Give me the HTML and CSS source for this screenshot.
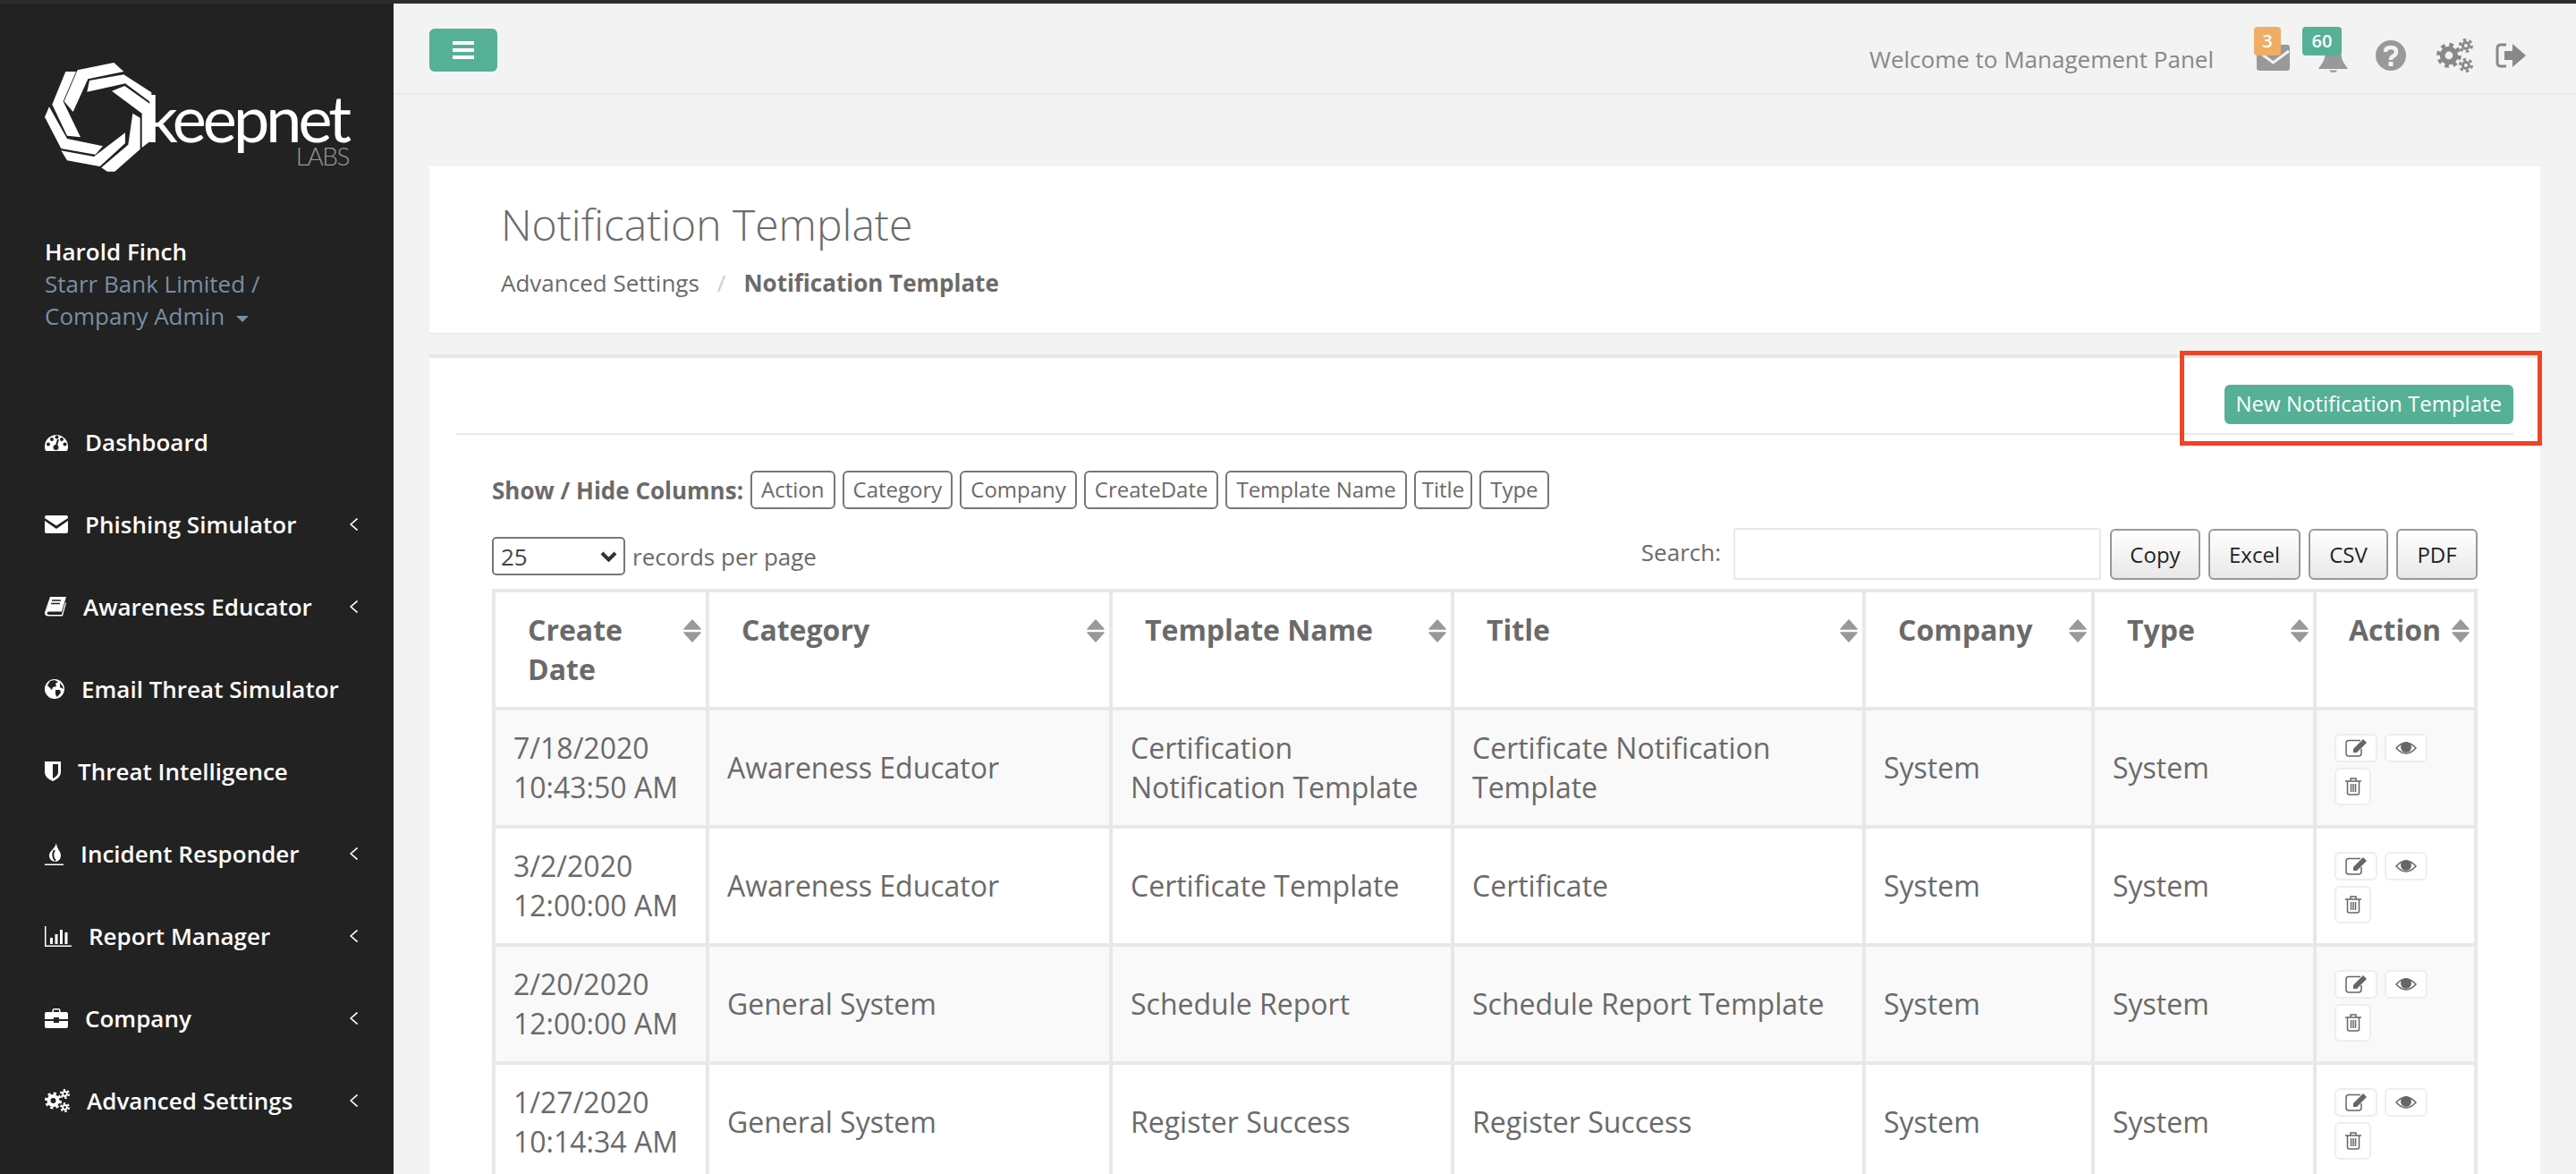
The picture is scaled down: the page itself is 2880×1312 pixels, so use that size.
FILE: index.html
```html
<!DOCTYPE html>
<html lang="en">

<head>
    <meta charset="UTF-8">
    <meta name="viewport" content="width=device-width, initial-scale=1.0">
    <title>Notification Template</title>
    <link rel="stylesheet" href="styles.css">
</head>

<body>
    <!-- iconos -->
    <svg class="sprite" xmlns="http://www.w3.org/2000/svg">
        <symbol id="i-dash" viewBox="0 0 26 19">
            <path fill="currentColor" d="M2 19Q0 19 0 14A13 13 0 0 1 26 14Q26 19 24 19Z" />
            <g fill="#222"><circle cx="4" cy="11.5" r="2" /><circle cx="8" cy="6" r="2" /><circle cx="13.500" cy="3.500" r="2" /><circle cx="19" cy="6" r="2" /><circle cx="22.500" cy="11.500" r="2" /><circle cx="12.500" cy="15" r="3" /></g>
            <path stroke="#222" stroke-width="2" d="M12.500 15L15 6" />
        </symbol>
        <symbol id="i-mail" viewBox="0 0 26 20">
            <path fill="currentColor" d="M0 2Q0 0 2 0H24Q26 0 26 2V3L13 11.500L0 3ZM0 6L13 15L26 6V18Q26 20 24 20H2Q0 20 0 18Z" />
        </symbol>
        <symbol id="i-book" viewBox="0 0 24 22">
            <path fill="currentColor" d="M6 0H24L19 16.500H5Q2.500 16.500 2.500 18.200T5 20H19L23 6L24 7L20 21.500H4Q0 21.500 0 17.500Z" />
            <path stroke="#222" stroke-width="1.500" d="M8 4H18M7 7.500H17" />
        </symbol>
        <symbol id="i-globe" viewBox="0 0 22 22">
            <circle fill="currentColor" cx="11" cy="11" r="11" />
            <path fill="#222" d="M6 2L11 1L15 3L12 5L13 8L9 9L8 12L5 9L3 7ZM12 12L17 12L18 15L14 20L12 17ZM17 4L20 8L21 11L17 9Z" />
        </symbol>
        <symbol id="i-shield" viewBox="0 0 18 22">
            <path fill="currentColor" d="M0 0H18V12Q18 18 9 22Q0 18 0 12Z" />
            <path fill="#222" d="M9 3H15V12Q15 16 9 19Z" />
        </symbol>
        <symbol id="i-fire" viewBox="0 0 21 25">
            <path fill="currentColor" d="M13 0C12 6 5 9 5 14C5 18 8 21 12 21C16 21 18 17 18 14C18 9 13 6 13 0ZM0 23.500H21V25H0Z" />
            <path fill="none" stroke="#222" stroke-width="2" d="M11 8Q7 14 12 20" />
        </symbol>
        <symbol id="i-chart" viewBox="0 0 30 23">
            <path fill="currentColor" d="M0 0H1.500V21.500H30V23H0ZM6 13H9V20H6ZM11.500 9H14.500V20H11.500ZM17 4H20V20H17ZM22.500 7H25.500V20H22.500Z" />
        </symbol>
        <symbol id="i-case" viewBox="0 0 26 22">
            <path fill="currentColor" d="M8.500 4V2Q8.500 0 10.500 0H15.500Q17.500 0 17.500 2V4H16V1.500H10V4ZM0 6Q0 4 2 4H24Q26 4 26 6V12H16V10H10V12H0ZM0 14H10V16H16V14H26V20Q26 22 24 22H2Q0 22 0 20Z" />
        </symbol>
        <symbol id="i-gears" viewBox="0 0 28 26">
            <g fill="none" stroke="currentColor">
                <circle cx="9.500" cy="13" r="5" stroke-width="4" />
                <circle cx="9.500" cy="13" r="8" stroke-width="3" stroke-dasharray="3.140 3.140" />
                <circle cx="22.500" cy="5.500" r="2.400" stroke-width="2" />
                <circle cx="22.500" cy="5.500" r="4.500" stroke-width="2" stroke-dasharray="2.360 2.360" />
                <circle cx="22.500" cy="20.500" r="2.400" stroke-width="2" />
                <circle cx="22.500" cy="20.500" r="4.500" stroke-width="2" stroke-dasharray="2.360 2.360" />
            </g>
        </symbol>
        <symbol id="i-back" viewBox="0 0 9 14">
            <path fill="none" stroke="currentColor" stroke-width="1.600" d="M8.500 .5L1.200 7L8.500 13.500" />
        </symbol>
        <symbol id="i-sort" viewBox="0 0 20 26">
            <path fill="currentColor" stroke="currentColor" stroke-width="1.500" stroke-linejoin="round" d="M10 1L19 11H1ZM1 15H19L10 25Z" />
        </symbol>
        <symbol id="i-edit" viewBox="0 0 24 20">
            <path fill="none" stroke="currentColor" stroke-width="1.500" d="M17 1.500H4Q1 1.500 1 4.500V16Q1 19 4 19H15Q18 19 18 16V11" />
            <path fill="currentColor" d="M20 0L24 4L13 15H9V11Z" />
        </symbol>
        <symbol id="i-eye" viewBox="0 0 24 16">
            <path fill="none" stroke="currentColor" stroke-width="1.500" d="M1 8Q12 -4 23 8Q12 20 1 8Z" />
            <circle fill="currentColor" cx="12" cy="7" r="6" />
        </symbol>
        <symbol id="i-trash" viewBox="0 0 18 20">
            <path fill="none" stroke="currentColor" stroke-width="1.500" d="M0 4H18M6 4V1H12V4M2.500 4V17Q2.500 19 4.500 19H13.500Q15.500 19 15.500 17V4" />
            <path stroke="currentColor" stroke-width="1.500" d="M6.500 7V16M9 7V16M11.500 7V16" />
        </symbol>
    </svg>

    <aside class="sidebar">
        <div class="logo">
            <svg class="logo-mark" viewBox="30 30 360 366" xmlns="http://www.w3.org/2000/svg">
                <path fill="#fff" d="M140 55L262 30L295 60L175 85L125 195L95 160Z" />
                <path fill="#fff" d="M100 60L135 60L92 160L150 280L105 275L55 170Z" />
                <path fill="#fff" d="M45 178L105 285L225 310L200 338L85 318L30 212Z" />
                <path fill="#fff" d="M85 325L195 345L300 265L300 300L215 378L105 358Z" />
                <path fill="#fff" d="M220 382L310 305L325 200L350 215L350 320L265 395L240 395Z" />
                <path fill="#fff" d="M180 90L295 70L388 130L388 165L300 100L172 128Z" />
                <path fill="#fff" d="M255 125L298 108L388 172L388 290L356 315L356 200Z" />
            </svg>
            <div class="logo-text">
                <span class="logo-name">keepnet</span>
                <span class="logo-sub">LABS</span>
            </div>
        </div>

        <div class="user">
            <div class="user-name">Harold Finch</div>
            <div class="user-role">Starr Bank Limited /<br>Company Admin <span class="caret"></span></div>
        </div>

        <ul class="menu">
            <li><svg class="ic-dash"><use href="#i-dash" /></svg><span>Dashboard</span></li>
            <li><svg class="ic-mail"><use href="#i-mail" /></svg><span>Phishing Simulator</span><svg class="back"><use href="#i-back" /></svg></li>
            <li><svg class="ic-book"><use href="#i-book" /></svg><span>Awareness Educator</span><svg class="back"><use href="#i-back" /></svg></li>
            <li><svg class="ic-globe"><use href="#i-globe" /></svg><span>Email Threat Simulator</span></li>
            <li><svg class="ic-shield"><use href="#i-shield" /></svg><span>Threat Intelligence</span></li>
            <li><svg class="ic-fire"><use href="#i-fire" /></svg><span>Incident Responder</span><svg class="back"><use href="#i-back" /></svg></li>
            <li><svg class="ic-chart"><use href="#i-chart" /></svg><span>Report Manager</span><svg class="back"><use href="#i-back" /></svg></li>
            <li><svg class="ic-case"><use href="#i-case" /></svg><span>Company</span><svg class="back"><use href="#i-back" /></svg></li>
            <li><svg class="ic-gears"><use href="#i-gears" /></svg><span>Advanced Settings</span><svg class="back"><use href="#i-back" /></svg></li>
        </ul>
    </aside>

    <main class="content">
        <header class="topbar">
            <button class="burger"><span></span><span></span><span></span></button>
            <div class="top-right">
                <span class="welcome">Welcome to Management Panel</span>
                <div class="top-icon ti-mail">
                    <svg viewBox="0 0 37 29">
                        <path fill="#999" d="M3 0H34Q37 0 37 3V26Q37 29 34 29H3Q0 29 0 26V3Q0 0 3 0Z" />
                        <path fill="none" stroke="#f3f3f3" stroke-width="3" d="M1 7L18.500 20L36 7" />
                    </svg>
                    <span class="badge badge-orange">3</span>
                </div>
                <div class="top-icon ti-bell">
                    <svg viewBox="0 0 33 31">
                        <path fill="#999" d="M16.500 0C8 0 8 8 7 14C6 20 2 23 0 27H33C31 23 27 20 26 14C25 8 25 0 16.500 0Z" />
                        <path fill="#999" d="M12 28.500H21Q20 31 16.500 31T12 28.500Z" />
                    </svg>
                    <span class="badge badge-green">60</span>
                </div>
                <div class="top-icon ti-help">
                    <svg viewBox="0 0 34 34">
                        <circle fill="#999" cx="17" cy="17" r="17" />
                        <path fill="none" stroke="#f3f3f3" stroke-width="4.500" d="M11 13Q11 8 17 8T23 13Q23 16 20 17.500T17 21V22" />
                        <path stroke="#f3f3f3" stroke-width="5" d="M17 24V29" />
                    </svg>
                </div>
                <div class="top-icon ti-gears"><svg><use href="#i-gears" /></svg></div>
                <div class="top-icon ti-out">
                    <svg viewBox="0 0 34 28">
                        <path fill="none" stroke="#888" stroke-width="3" d="M12 2H6Q2 2 2 6V22Q2 26 6 26H12" />
                        <path fill="#888" d="M10 9H19V1L34 14L19 27V19H10Z" />
                    </svg>
                </div>
            </div>
        </header>

        <section class="page-head">
            <h1>Notification Template</h1>
            <div class="crumbs">
                <span>Advanced Settings</span><span class="sep">/</span><b>Notification Template</b>
            </div>
        </section>

        <section class="panel">
            <div class="panel-top">
                <a class="btn-new">New Notification Template</a>
            </div>
            <div class="red-box"></div>

            <div class="data-wrap">
                <div class="col-toggle">
                    <b>Show / Hide Columns:</b>
                    <span class="chip">Action</span>
                    <span class="chip">Category</span>
                    <span class="chip">Company</span>
                    <span class="chip">CreateDate</span>
                    <span class="chip">Template Name</span>
                    <span class="chip chip-sm">Title</span>
                    <span class="chip">Type</span>
                </div>

                <div class="toolbar">
                    <div class="per-page">
                        <select>
                            <option>25</option>
                            <option>50</option>
                            <option>100</option>
                        </select>
                        <span>records per page</span>
                    </div>
                    <div class="search">
                        <label for="q">Search:</label>
                        <input type="text" id="q">
                        <button class="btn-x b-copy">Copy</button>
                        <button class="btn-x b-excel">Excel</button>
                        <button class="btn-x b-csv">CSV</button>
                        <button class="btn-x b-pdf">PDF</button>
                    </div>
                </div>

                <table class="grid">
                    <thead>
                        <tr>
                            <th class="c-date"><div><span>Create Date</span><svg class="sort"><use href="#i-sort" /></svg></div></th>
                            <th class="c-cat"><div><span>Category</span><svg class="sort"><use href="#i-sort" /></svg></div></th>
                            <th class="c-name"><div><span>Template Name</span><svg class="sort"><use href="#i-sort" /></svg></div></th>
                            <th class="c-title"><div><span>Title</span><svg class="sort"><use href="#i-sort" /></svg></div></th>
                            <th class="c-comp"><div><span>Company</span><svg class="sort"><use href="#i-sort" /></svg></div></th>
                            <th class="c-type"><div><span>Type</span><svg class="sort"><use href="#i-sort" /></svg></div></th>
                            <th class="c-act"><div><span>Action</span><svg class="sort"><use href="#i-sort" /></svg></div></th>
                        </tr>
                    </thead>
                    <tbody>
                        <tr>
                            <td>7/18/2020 10:43:50 AM</td>
                            <td>Awareness Educator</td>
                            <td>Certification Notification Template</td>
                            <td>Certificate Notification Template</td>
                            <td>System</td>
                            <td>System</td>
                            <td class="acts"><a class="act a-w"><svg class="s-edit"><use href="#i-edit" /></svg></a><a class="act a-w"><svg class="s-eye"><use href="#i-eye" /></svg></a><a class="act a-t"><svg class="s-trash"><use href="#i-trash" /></svg></a></td>
                        </tr>
                        <tr>
                            <td>3/2/2020 12:00:00 AM</td>
                            <td>Awareness Educator</td>
                            <td>Certificate Template</td>
                            <td>Certificate</td>
                            <td>System</td>
                            <td>System</td>
                            <td class="acts"><a class="act a-w"><svg class="s-edit"><use href="#i-edit" /></svg></a><a class="act a-w"><svg class="s-eye"><use href="#i-eye" /></svg></a><a class="act a-t"><svg class="s-trash"><use href="#i-trash" /></svg></a></td>
                        </tr>
                        <tr>
                            <td>2/20/2020 12:00:00 AM</td>
                            <td>General System</td>
                            <td>Schedule Report</td>
                            <td>Schedule Report Template</td>
                            <td>System</td>
                            <td>System</td>
                            <td class="acts"><a class="act a-w"><svg class="s-edit"><use href="#i-edit" /></svg></a><a class="act a-w"><svg class="s-eye"><use href="#i-eye" /></svg></a><a class="act a-t"><svg class="s-trash"><use href="#i-trash" /></svg></a></td>
                        </tr>
                        <tr>
                            <td>1/27/2020 10:14:34 AM</td>
                            <td>General System</td>
                            <td>Register Success</td>
                            <td>Register Success</td>
                            <td>System</td>
                            <td>System</td>
                            <td class="acts"><a class="act a-w"><svg class="s-edit"><use href="#i-edit" /></svg></a><a class="act a-w"><svg class="s-eye"><use href="#i-eye" /></svg></a><a class="act a-t"><svg class="s-trash"><use href="#i-trash" /></svg></a></td>
                        </tr>
                    </tbody>
                </table>
            </div>
        </section>
    </main>
</body>

</html>
```

FILE: styles.css
```css
* {
    box-sizing: border-box;
}

html, body {
    height: 100%;
}

body {
    margin: 0;
    display: flex;
    overflow: hidden;
    border-top: 4px solid #2c2c30;
    background-color: #f3f3f3;
    font-family: "Open Sans", sans-serif;
    color: #6a6a6a;
}

.sprite {
    display: none;
}

/* menu lateral */
.sidebar {
    width: 440px;
    flex: none;
    background-color: #222;
    color: #fff;
    padding-top: 66px;
}

.logo {
    display: flex;
    padding-left: 50px;
    height: 122px;
}

.logo-mark {
    width: 120px;
    height: 122px;
    flex: none;
}

.logo-text {
    width: 214px;
    margin-left: 8px;
    display: flex;
    flex-direction: column;
    align-items: flex-end;
}

.logo-name {
    font-family: "Lato", sans-serif;
    font-weight: 400;
    font-size: 72px;
    line-height: 80px;
    letter-spacing: -4px;
    margin-top: 21px;
    margin-right: 3px;
    white-space: nowrap;
}

.logo-sub {
    font-family: "Lato", sans-serif;
    font-weight: 300;
    font-size: 28px;
    line-height: 24px;
    letter-spacing: -1.5px;
    color: #999;
    margin-top: -9px;
    margin-right: 2px;
}

.user {
    margin-top: 71px;
    padding-left: 50px;
    font-size: 26px;
    line-height: 36px;
}

.user-name {
    font-weight: 600;
}

.user-role {
    color: #7a8ea3;
}

.caret {
    display: inline-block;
    margin-left: 6px;
    vertical-align: middle;
    border-top: 7px solid #7a8ea3;
    border-left: 7px solid transparent;
    border-right: 7px solid transparent;
}

.menu {
    list-style: none;
    margin: 77px 0 0;
    padding: 0 40px 0 50px;
}

.menu li {
    height: 92px;
    display: flex;
    align-items: center;
    gap: 19px;
    font-size: 26px;
    font-weight: 600;
    white-space: nowrap;
}

.ic-dash { width: 26px; height: 19px; }
.ic-mail { width: 26px; height: 20px; }
.ic-book { width: 24px; height: 22px; }
.ic-globe { width: 22px; height: 22px; }
.ic-shield { width: 18px; height: 22px; }
.ic-fire { width: 21px; height: 25px; }
.ic-chart { width: 30px; height: 23px; }
.ic-case { width: 26px; height: 22px; }
.ic-gears { width: 28px; height: 26px; }

.back {
    width: 9px;
    height: 14px;
    margin-left: auto;
}

/* contenido */
.content {
    flex: 1;
    min-width: 0;
}

.topbar {
    height: 102px;
    display: flex;
    justify-content: space-between;
    padding: 28px 56px 0 40px;
    border-bottom: 2px solid #ececec;
}

.burger {
    width: 76px;
    height: 48px;
    padding: 0;
    border: none;
    border-radius: 6px;
    background-color: #55b096;
    display: flex;
    flex-direction: column;
    align-items: center;
    justify-content: center;
    gap: 4px;
}

.burger span {
    width: 24px;
    height: 4px;
    background-color: #fff;
}

.top-right {
    display: flex;
    align-items: flex-start;
}

.welcome {
    font-size: 26px;
    line-height: 36px;
    margin-top: 16px;
    color: #888;
    margin-right: 48px;
}

.top-icon {
    position: relative;
    display: flex;
}

.top-icon svg {
    display: block;
}

.ti-mail { margin-top: 18px; }
.ti-mail svg { width: 37px; height: 29px; }
.ti-bell { margin: 18px 0 0 32px; }
.ti-bell svg { width: 33px; height: 31px; }
.ti-help { margin: 13px 0 0 31px; }
.ti-help svg { width: 34px; height: 34px; }
.ti-gears { margin: 11px 0 0 33px; color: #888; }
.ti-gears svg { width: 43px; height: 38px; }
.ti-out { margin: 16px 0 0 24px; }
.ti-out svg { width: 34px; height: 28px; }

.badge {
    position: absolute;
    top: -20px;
    height: 32px;
    border-radius: 4px;
    color: #fff;
    font-size: 20px;
    font-weight: 600;
    line-height: 32px;
    text-align: center;
}

.badge-orange {
    left: -3px;
    width: 30px;
    background-color: #f0ad66;
}

.badge-green {
    left: -18px;
    width: 44px;
    background-color: #55b096;
}

.page-head {
    margin: 80px 40px 0;
    height: 188px;
    padding: 38px 80px 0;
    background-color: #fff;
    border-bottom: 2px solid #ececec;
}

.page-head h1 {
    margin: 0;
    font-size: 48px;
    font-weight: 300;
    line-height: 54px;
}

.crumbs {
    margin-top: 20px;
    font-size: 26px;
    line-height: 36px;
}

.crumbs .sep {
    margin: 0 20px;
    color: #ccc;
}

.crumbs b {
    font-weight: 700;
}

.panel {
    position: relative;
    margin: 22px 40px 0;
    padding: 30px 30px 0;
    background-color: #fff;
    border-top: 4px solid #e8e8e8;
}

.panel-top {
    display: flex;
    justify-content: flex-end;
    padding-bottom: 10px;
    border-bottom: 2px solid #e8e8e8;
}

.btn-new {
    height: 44px;
    padding: 0 13px;
    border-radius: 6px;
    background-color: #55b096;
    color: #fff;
    font-size: 24px;
    line-height: 42px;
}

/* recuadro rojo de la captura */
.red-box {
    position: absolute;
    left: 1957px;
    top: -8px;
    width: 405px;
    height: 106px;
    border: 5px solid #f04426;
}

.data-wrap {
    margin: 0 40px;
}

.col-toggle {
    display: flex;
    align-items: center;
    margin-top: 40px;
    gap: 8px;
    font-size: 26px;
}

.col-toggle b {
    font-weight: 700;
}

.chip {
    height: 43px;
    padding: 0 10px;
    border: 2px solid #777;
    border-radius: 6px;
    font-size: 24px;
    line-height: 37px;
}

.chip-sm {
    padding: 0 7px;
}

.toolbar {
    display: flex;
    justify-content: space-between;
    margin-top: 21px;
    margin-bottom: 10px;
}

.per-page {
    display: flex;
    align-items: center;
    gap: 8px;
    height: 43px;
    margin-top: 10px;
    font-size: 26px;
}

.per-page select {
    appearance: none;
    width: 149px;
    height: 43px;
    padding-left: 8px;
    border: 2px solid #777;
    border-radius: 5px;
    background: #fff url("data:image/svg+xml,%3Csvg xmlns='http://www.w3.org/2000/svg' viewBox='0 0 19 12'%3E%3Cpath fill='none' stroke='%23333' stroke-width='4' d='M2 2L9.500 9.500L17 2'/%3E%3C/svg%3E") no-repeat right 7px center / 19px 12px;
    color: #444;
    font-family: "Open Sans", sans-serif;
    font-size: 26px;
}

.search {
    display: flex;
    align-items: center;
    height: 58px;
    font-size: 26px;
}

.search label {
    margin: 0 14px 5px 0;
}

.search input {
    width: 411px;
    height: 58px;
    margin-right: 10px;
    border: 2px solid #e8e8e8;
    border-radius: 3px;
    background-color: #fff;
}

.btn-x {
    height: 57px;
    margin-right: 9px;
    padding: 0;
    border: 2px solid #999;
    border-radius: 6px;
    background: linear-gradient(#fff, #e8e8e8);
    color: #222;
    font-family: "Open Sans", sans-serif;
    font-size: 24px;
}

.b-copy { width: 101px; }
.b-excel { width: 103px; }
.b-csv { width: 89px; }
.b-pdf { width: 91px; margin-right: 0; }

.grid {
    width: 2220px;
    table-layout: fixed;
    border-collapse: collapse;
    font-size: 32px;
    line-height: 44px;
}

.grid th, .grid td {
    border: 4px solid #e8e8e8;
}

.grid th {
    padding: 20px 5px 20px 36px;
    font-weight: 700;
    text-align: left;
    vertical-align: top;
}

.grid th div {
    display: flex;
    justify-content: space-between;
    gap: 10px;
}

.grid td {
    height: 132px;
    padding: 20px;
}

.grid tbody tr:nth-child(odd) {
    background-color: #f9f9f9;
}

.c-date { width: 239px; }
.c-cat { width: 451px; }
.c-name { width: 382px; }
.c-title { width: 460px; }
.c-comp { width: 256px; }
.c-type { width: 248px; }
.c-act { width: 180px; }

.sort {
    width: 20px;
    height: 26px;
    flex: none;
    margin-top: 10px;
    color: #999;
}

.grid .acts {
    padding: 22px 20px 18px;
    line-height: 0;
}

.act {
    display: inline-flex;
    align-items: center;
    justify-content: center;
    margin-right: 8px;
    border: 2px solid #eee;
    border-radius: 6px;
    background-color: #fff;
    color: #666;
    vertical-align: top;
}

.a-w { width: 48px; height: 32px; margin-bottom: 6px; }
.a-t { width: 41px; height: 42px; }

.s-edit { width: 24px; height: 20px; }
.s-eye { width: 24px; height: 16px; }
.s-trash { width: 18px; height: 20px; }
```
